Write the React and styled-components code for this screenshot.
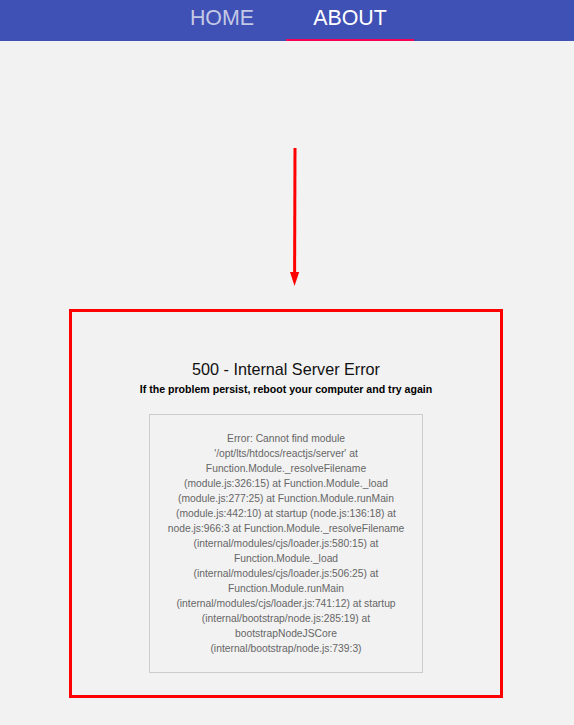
import React from "react";
import styled, { createGlobalStyle } from "styled-components";

const Global = createGlobalStyle`
  html, body {
    margin: 0;
    padding: 0;
    background: #f2f2f2;
    font-family: "Liberation Sans", Arial, sans-serif;
  }
`;

const NavBar = styled.nav`
  height: 41px;
  background: #3f51b5;
  display: flex;
  justify-content: center;
  padding-right: 2px;
`;

const Tab = styled.div`
  box-sizing: border-box;
  width: 128px;
  height: 41px;
  padding-top: 8px;
  text-align: center;
  font-size: 21.4px;
  line-height: 21.4px;
  color: ${(p) => (p.$active ? "#ffffff" : "rgba(255,255,255,0.7)")};
  border-bottom: 2px solid ${(p) => (p.$active ? "#f50057" : "transparent")};
`;

const Main = styled.main`
  display: flex;
  flex-direction: column;
`;

const Arrow = styled.svg`
  display: block;
  margin: 105px 0 21px 285px;
`;

const ErrorBox = styled.section`
  box-sizing: border-box;
  width: 434px;
  margin: 0 0 0 69px;
  border: 3px solid #ff0000;
  padding: 47px 0 22px;
  display: flex;
  flex-direction: column;
  align-items: center;
`;

const Title = styled.h1`
  margin: 0;
  font-size: 16.2px;
  line-height: 20px;
  font-weight: 400;
  color: #111;
`;

const Subtitle = styled.p`
  margin: 3px 0 18px;
  font-size: 10.6px;
  line-height: 14px;
  font-weight: 700;
  color: #000;
`;

const Trace = styled.pre`
  box-sizing: border-box;
  width: 274px;
  margin: 0;
  padding: 16px;
  border: 1px solid #cccccc;
  font-family: "Liberation Sans", Arial, sans-serif;
  font-size: 10.3px;
  line-height: 15px;
  color: #666;
  text-align: center;
  white-space: normal;
`;

const traceText =
  "Error: Cannot find module '/opt/lts/htdocs/reactjs/server' at Function.Module._resolveFilename (module.js:326:15) at Function.Module._load (module.js:277:25) at Function.Module.runMain (module.js:442:10) at startup (node.js:136:18) at node.js:966:3 at Function.Module._resolveFilename (internal/modules/cjs/loader.js:580:15) at Function.Module._load (internal/modules/cjs/loader.js:506:25) at Function.Module.runMain (internal/modules/cjs/loader.js:741:12) at startup (internal/bootstrap/node.js:285:19) at bootstrapNodeJSCore (internal/bootstrap/node.js:739:3)";

export default function App() {
  return (
    <>
      <Global />
      <NavBar>
        <Tab>HOME</Tab>
        <Tab $active>ABOUT</Tab>
      </NavBar>
      <Main>
        <Arrow width="20" height="142" viewBox="0 0 20 142">
          <line x1="10" y1="2" x2="9.6" y2="128" stroke="#ff0000" strokeWidth="3" />
          <polygon points="5,126 14.2,126 9.5,140" fill="#ff0000" />
        </Arrow>
        <ErrorBox>
          <Title>500 - Internal Server Error</Title>
          <Subtitle>If the problem persist, reboot your computer and try again</Subtitle>
          <Trace>{traceText}</Trace>
        </ErrorBox>
      </Main>
    </>
  );
}
